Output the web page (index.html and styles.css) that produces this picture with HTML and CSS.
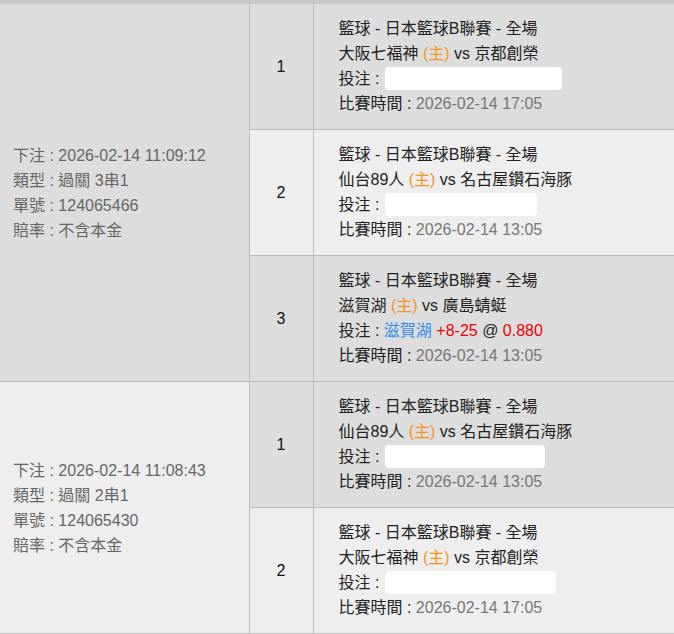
FILE: index.html
```html
<!DOCTYPE html>
<html lang="zh-Hant">
<head>
<meta charset="utf-8">
<link rel="stylesheet" href="styles.css">
</head>
<body>
<div class="topbar"></div>
<table class="bets">
  <colgroup><col class="c-info"><col class="c-no"><col class="c-detail"></colgroup>
  <tbody>
    <tr>
      <td class="info dark" rowspan="3">
        <div>下注 : 2026-02-14 11:09:12</div>
        <div>類型 : 過關 3串1</div>
        <div>單號 : 124065466</div>
        <div>賠率 : 不含本金</div>
      </td>
      <td class="no dark">1</td>
      <td class="detail dark">
        <div>籃球 - 日本籃球B聯賽 - 全場</div>
        <div>大阪七福神 <span class="home">(主)</span> vs 京都創榮</div>
        <div>投注 : <span class="mask" style="width:177px"></span></div>
        <div>比賽時間 : <span class="time">2026-02-14 17:05</span></div>
      </td>
    </tr>
    <tr>
      <td class="no light">2</td>
      <td class="detail light">
        <div>籃球 - 日本籃球B聯賽 - 全場</div>
        <div>仙台89人 <span class="home">(主)</span> vs 名古屋鑽石海豚</div>
        <div>投注 : <span class="mask" style="width:152px"></span></div>
        <div>比賽時間 : <span class="time">2026-02-14 13:05</span></div>
      </td>
    </tr>
    <tr>
      <td class="no dark">3</td>
      <td class="detail dark">
        <div>籃球 - 日本籃球B聯賽 - 全場</div>
        <div>滋賀湖 <span class="home">(主)</span> vs 廣島蜻蜓</div>
        <div>投注 : <span class="team">滋賀湖</span> <span class="red">+8-25</span> @ <span class="red">0.880</span></div>
        <div>比賽時間 : <span class="time">2026-02-14 13:05</span></div>
      </td>
    </tr>
    <tr>
      <td class="info light" rowspan="2">
        <div>下注 : 2026-02-14 11:08:43</div>
        <div>類型 : 過關 2串1</div>
        <div>單號 : 124065430</div>
        <div>賠率 : 不含本金</div>
      </td>
      <td class="no dark">1</td>
      <td class="detail dark">
        <div>籃球 - 日本籃球B聯賽 - 全場</div>
        <div>仙台89人 <span class="home">(主)</span> vs 名古屋鑽石海豚</div>
        <div>投注 : <span class="mask" style="width:160px"></span></div>
        <div>比賽時間 : <span class="time">2026-02-14 13:05</span></div>
      </td>
    </tr>
    <tr>
      <td class="no light">2</td>
      <td class="detail light">
        <div>籃球 - 日本籃球B聯賽 - 全場</div>
        <div>大阪七福神 <span class="home">(主)</span> vs 京都創榮</div>
        <div>投注 : <span class="mask" style="width:171px"></span></div>
        <div>比賽時間 : <span class="time">2026-02-14 17:05</span></div>
      </td>
    </tr>
  </tbody>
</table>
</body>
</html>
```

FILE: styles.css
```css
html, body {
  margin: 0;
  padding: 0;
  background: #ffffff;
}
body {
  font-family: "Liberation Sans", Arial, "Noto Sans CJK TC", sans-serif;
  font-size: 16px;
  line-height: 25px;
  color: #222;
  overflow: hidden;
}
.topbar {
  height: 4px;
  background: #c9c9c9;
}
.bets {
  border-collapse: collapse;
  table-layout: fixed;
  width: 676px;
}
.c-info { width: 249px; }
.c-no { width: 64px; }
.c-detail { width: 363px; }
.bets td {
  border: 1px solid #bbb;
  padding: 0;
  vertical-align: middle;
}
.bets tr:first-child td { border-top: 0; }
.bets td.info { border-left: 0; }
.dark { background: #dddddd; }
.light { background: #eeeeee; }
.info {
  padding-left: 13px !important;
  color: #666;
}
.no {
  text-align: center;
  color: #111;
  height: 125px;
}
.detail {
  padding: 12px 0 13px 25px !important;
  height: 100px;
}
.home { color: #f7941d; }
.time { color: #777; }
.team { color: #2f8cf0; }
.red { color: #f20000; }
.mask {
  display: inline-block;
  height: 23px;
  background: #fff;
  border-radius: 4px;
  vertical-align: -6px;
  margin-left: 1px;
}
```
